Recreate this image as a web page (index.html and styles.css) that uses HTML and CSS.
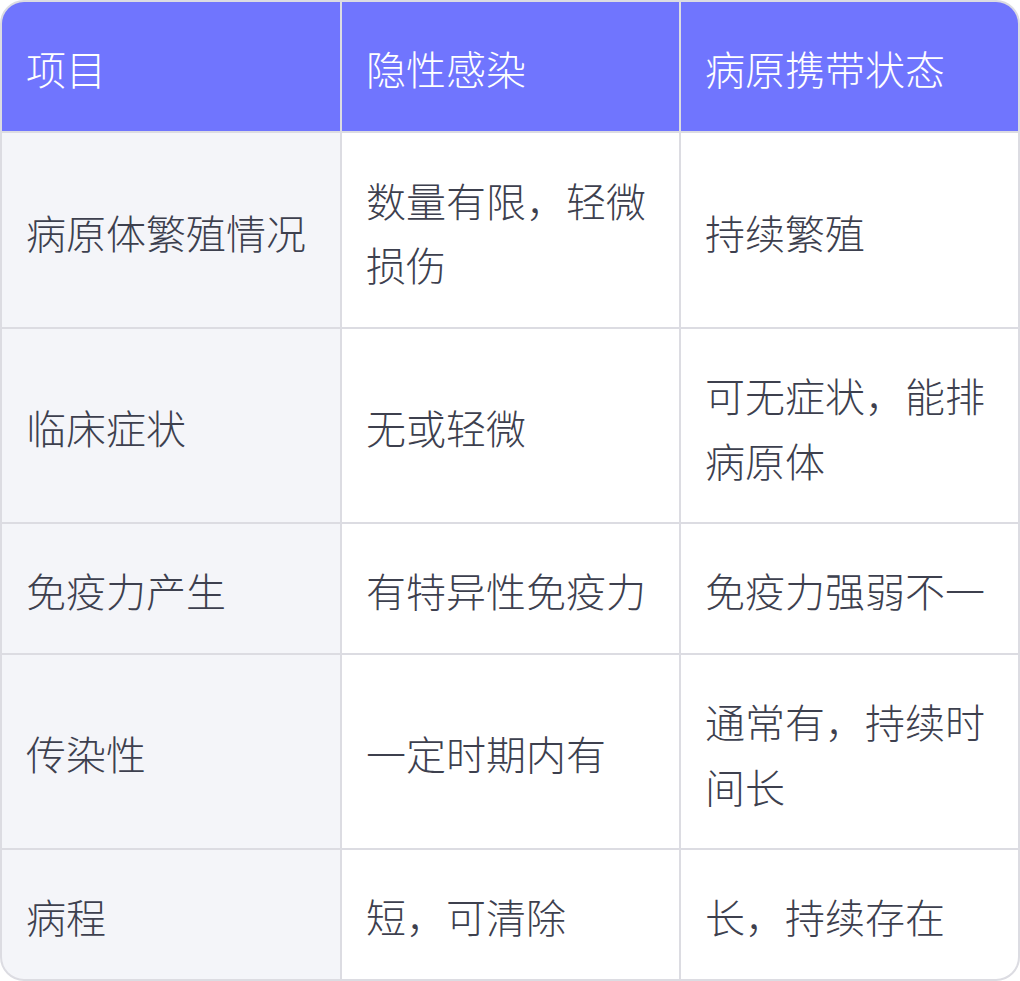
FILE: index.html
```html
<!DOCTYPE html>
<html lang="zh-CN">
<head>
<meta charset="utf-8">
<title>隐性感染与病原携带状态</title>
<link rel="stylesheet" href="styles.css">
</head>
<body>
<div class="table">
  <div class="cell head">项目</div>
  <div class="cell head">隐性感染</div>
  <div class="cell head">病原携带状态</div>

  <div class="cell label">病原体繁殖情况</div>
  <div class="cell">数量有限，轻微损伤</div>
  <div class="cell">持续繁殖</div>

  <div class="cell label">临床症状</div>
  <div class="cell">无或轻微</div>
  <div class="cell">可无症状，能排病原体</div>

  <div class="cell label">免疫力产生</div>
  <div class="cell">有特异性免疫力</div>
  <div class="cell">免疫力强弱不一</div>

  <div class="cell label">传染性</div>
  <div class="cell">一定时期内有</div>
  <div class="cell">通常有，持续时间长</div>

  <div class="cell label">病程</div>
  <div class="cell">短，可清除</div>
  <div class="cell">长，持续存在</div>
</div>
</body>
</html>
```

FILE: styles.css
```css
html, body {
  margin: 0;
  padding: 0;
  background: #ffffff;
}

.table {
  width: 1020px;
  height: 981px;
  box-sizing: border-box;
  display: grid;
  grid-template-columns: 338px 337px 337px;
  grid-template-rows: 129px 194px 193px 129px 193px 129px;
  gap: 2px;
  background: #dcdce2;
  border: 2px solid #dcdce2;
  border-radius: 24px;
  overflow: hidden;
  font-family: "Noto Sans CJK SC", "Noto Sans", sans-serif;
  font-size: 40px;
  font-weight: 300;
  line-height: 64.5px;
  color: #3d404e;
}

.cell {
  background: #ffffff;
  padding: 4px 24px 0 24px;
  display: flex;
  align-items: center;
  box-sizing: border-box;
}

.cell.label {
  background: #f4f5f9;
}

.cell.head {
  background: #7075fe;
  color: #ffffff;
}
```
